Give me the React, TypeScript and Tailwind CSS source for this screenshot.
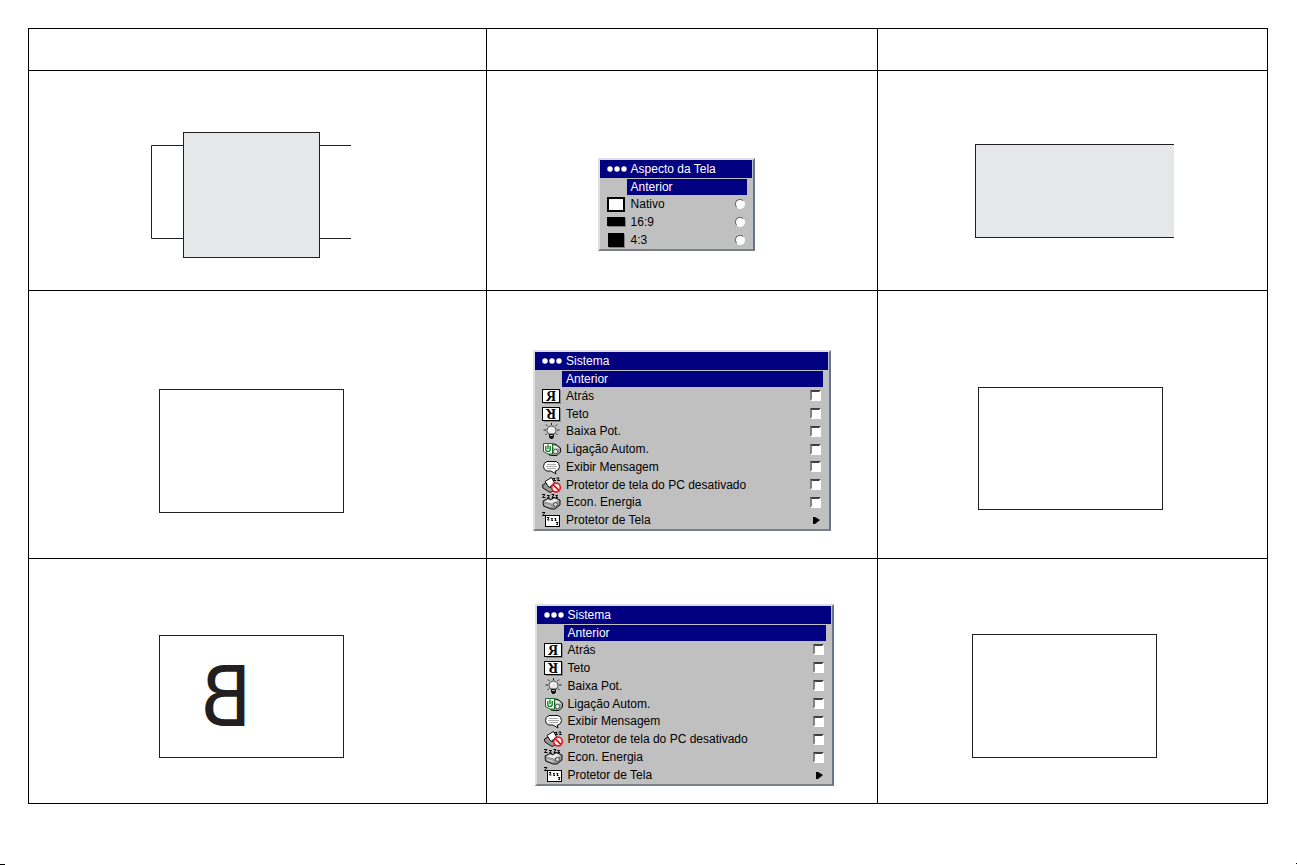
import type { ReactNode } from 'react';

const frameCls = 'border border-[#231f20]';
const panelCls = 'flex flex-col border-l-2 border-t-2 border-b-2 border-r-2 border-l-[#dfdfdf] border-t-[#dfdfdf] border-b-[#7b7f88] border-r-[#66758f] bg-[#c0c0c0] text-xs leading-4 text-black';
const checkCls = 'size-[11px] shrink-0 appearance-none border-2 border-t-[#404040] border-l-[#808080] border-r-white border-b-white bg-white checked:bg-black';
const radioCls = 'size-2.5 shrink-0 appearance-none rounded-full border border-t-[#606060] border-l-[#606060] border-r-white border-b-white bg-white checked:bg-black';

function Icon({ children }: { children: ReactNode }) {
  return <svg viewBox="0 0 20 16" className="h-4 w-5 shrink-0 overflow-visible" aria-hidden="true">{children}</svg>;
}

function LetterIcon({ turn }: { turn: string }) {
  return (
    <Icon>
      <rect x="2" y="2" width="17" height="14" fill="#8a8a8a" />
      <rect x="0.5" y="1.5" width="17" height="13" fill="#fff" stroke="#000" />
      <g transform={`translate(9 8) ${turn}`}>
        <text x="0" y="5" textAnchor="middle" fontSize="14" fontWeight="bold" className="font-['Liberation_Serif',serif]">R</text>
      </g>
    </Icon>
  );
}

const bulbIcon = (
  <Icon>
    <path d="M9.5 0 V2 M4 1.5 L5.5 3 M15 1.5 L13.5 3 M1.5 7 H4 M15 7 H17.5 M3.5 12 L5 10.5 M15.5 12 L14 10.5" stroke="#222" />
    <path d="M7 11 C3.5 8.5 5 3 9.5 3 C14 3 15.5 8.5 12 11 Z" fill="#e8e8e8" stroke="#444" />
    <path d="M8 5 L7 7.5" stroke="#fff" strokeWidth="1.6" />
    <path d="M7 11 H12 V14 L10.5 16 H8.5 L7 14 Z" fill="#111" />
    <path d="M8 12.5 H11" stroke="#bbb" />
  </Icon>
);

const powerIcon = (
  <Icon>
    <path d="M9 2.5 L14 3.5 L18.5 7 V11 L15 14.5 H11 L7 14 Z" fill="#a0a0a0" stroke="#111" />
    <path d="M11 4.5 L15 5.5 L17 7.5 H12 Z" fill="#eee" />
    <circle cx="13.5" cy="10.5" r="2.2" fill="#eee" stroke="#555" />
    <path d="M1.5 2.5 H10.5 V13 H6 L1.5 10.5 Z" fill="#fff" stroke="#176b22" />
    <path d="M3.8 5 V8.5 Q3.8 10.5 6 10.5 Q8.2 10.5 8.2 8.5 V5 M6 3.5 V8" fill="none" stroke="#108424" strokeWidth="1.4" />
  </Icon>
);

const messageIcon = (
  <Icon>
    <path d="M5 2.5 H14 Q17.5 3.5 17.5 7.5 Q17.5 11 14 12 H13 L14 15 L9 12 H5 Q1.5 11 1.5 7.5 Q1.5 3.5 5 2.5 Z" fill="#fff" stroke="#111" />
    <path d="M5 5.5 H14 M4 7.5 H15 M5 9.5 H14" stroke="#aaa" />
  </Icon>
);

const blockedIcon = (
  <Icon>
    <path d="M0.5 8 L4 6 L8 10.5 L13 8 V13 L8 15.5 L1 11 Z" fill="#999" stroke="#111" />
    <path d="M3 4.5 L9.5 0.5 L12.5 6 L7 10.5 Z" fill="#fff" stroke="#111" />
    <path d="M10.5 1.5 H13 L11.5 3.5 H14 M14.5 1 H17 L15.5 3.5 H18" fill="none" stroke="#000" />
    <circle cx="14" cy="10.5" r="4.3" fill="#fff" stroke="#e51c23" strokeWidth="1.7" />
    <path d="M11 7.5 L17 13.5" stroke="#e51c23" strokeWidth="1.8" />
  </Icon>
);

const energyIcon = (
  <Icon>
    <path d="M1 7 L6 4.5 L9 5.5 L12 3.5 L18 6 V11 L13 15 H9 L1.5 12 Z" fill="#999" stroke="#111" />
    <path d="M2.5 7.5 L6 5.5 L9 6.5 L12.5 4.5 L16.5 6.5 L10 9.5 Z" fill="#e8e8e8" />
    <circle cx="13.5" cy="10.5" r="2" fill="#ddd" stroke="#444" />
    <path d="M3 10.5 L9 12.5" stroke="#ddd" />
    <path d="M0 0.5 H3 L0.5 3.5 H3.5 M5 1.5 H7.5 L5.5 4 H8 M9.5 0.5 H12 L10 3.5 H12.5 M13.5 1.5 H15.5 L14 3.5 H16" fill="none" stroke="#000" />
  </Icon>
);

const saverIcon = (
  <Icon>
    <rect x="3.5" y="3.5" width="14" height="11" fill="#fff" stroke="#000" />
    <path d="M0 0.5 H3 L0.5 3.5 H3.5 M5 5.5 H7 L5.5 8 H7.5 M9 6.5 H10.5 L9.5 8.5 H11 M12.5 6.5 H14 L13 8.5 H14.5 M14 10.5 H16 L14.5 12.5 H16" fill="none" stroke="#000" />
  </Icon>
);

const systemItems: [string, ReactNode][] = [
  ['Atrás', <LetterIcon turn="scale(-1 1)" />],
  ['Teto', <LetterIcon turn="rotate(180)" />],
  ['Baixa Pot.', bulbIcon],
  ['Ligação Autom.', powerIcon],
  ['Exibir Mensagem', messageIcon],
  ['Protetor de tela do PC desativado', blockedIcon],
  ['Econ. Energia', energyIcon],
];

const aspectItems: [string, ReactNode][] = [
  ['Nativo', <Icon><rect x="1" y="2" width="16" height="13" fill="#fff" stroke="#000" strokeWidth="2" /></Icon>],
  ['16:9', <Icon><rect x="1" y="4" width="18" height="9" fill="#808080" /><rect x="0" y="3" width="18" height="9" /></Icon>],
  ['4:3', <Icon><rect x="2" y="2" width="16" height="14" fill="#808080" /><rect x="1" y="1" width="16" height="14" /></Icon>],
];

function MenuHead({ title }: { title: string }) {
  return (
    <>
      <div className="mr-px flex h-[18px] items-center bg-[#000080] pl-[7px] text-white">
        <svg viewBox="0 0 20 6" className="h-1.5 w-5" fill="#fff" aria-hidden="true">
          <circle cx="3" cy="3" r="2.7" /><circle cx="10" cy="3" r="2.7" /><circle cx="17" cy="3" r="2.7" />
        </svg>
        <h2 className="pl-1">{title}</h2>
      </div>
      <button type="button" className="mt-px mr-1.5 ml-[27px] h-4 bg-[#000080] pl-1 text-left text-white">Anterior</button>
    </>
  );
}

function SystemMenu({ name, className }: { name: string; className: string }) {
  return (
    <section className={`${panelCls} ${className}`}>
      <MenuHead title="Sistema" />
      <div className="grid flex-1 auto-rows-fr">
        {systemItems.map(([label, icon]) => (
          <label key={label} className="flex min-h-0 items-center gap-1 pr-2 pl-[7px]">
            {icon}
            <span className="flex-1">{label}</span>
            <input type="checkbox" name={name} className={checkCls} />
          </label>
        ))}
        <button type="button" className="flex min-h-0 items-center gap-1 pr-2 pl-[7px] text-left">
          {saverIcon}
          <span className="flex-1">Protetor de Tela</span>
          <svg viewBox="0 0 8 8" className="size-2" aria-hidden="true"><path d="M0 1 H2 L7 4 L2 8 H0 Z" /></svg>
        </button>
      </div>
    </section>
  );
}

function AspectMenu() {
  return (
    <section className={`${panelCls} w-[157px]`}>
      <MenuHead title="Aspecto da Tela" />
      {aspectItems.map(([label, icon]) => (
        <label key={label} className="flex h-[18px] items-center gap-1 pr-2 pl-[7px]">
          {icon}
          <span className="flex-1">{label}</span>
          <input type="radio" name="aspecto" className={radioCls} />
        </label>
      ))}
    </section>
  );
}

function Cell({ className, children }: { className: string; children: ReactNode }) {
  return (
    <td className="border-t border-l border-black p-0 align-top">
      <div className={`flex justify-center ${className}`}>{children}</div>
    </td>
  );
}

export default function App() {
  return (
    <div className="flex min-h-screen flex-col bg-white pt-7 font-['Liberation_Sans',Arial,sans-serif]">
      <main className="pr-[29px] pl-7">
        <table className="w-full table-fixed border-separate border-spacing-0 border-r border-b border-black">
          <colgroup>
            <col className="w-[37%]" />
            <col className="w-[31.5%]" />
            <col className="w-[31.5%]" />
          </colgroup>
          <thead>
            <tr className="h-[42px]">
              <th className="border-t border-l border-black" />
              <th className="border-t border-l border-black" />
              <th className="border-t border-l border-black" />
            </tr>
          </thead>
          <tbody>
            <tr className="h-[220px]">
              <Cell className="pt-[61px] pr-3.5">
                <svg width="200" height="126" fill="none" stroke="#231f20" aria-hidden="true">
                  <path d="M32 13.5 H0.5 V106.5 H32 M169 13.5 H200 M169 106.5 H200" />
                  <rect x="32.5" y="0.5" width="136" height="125" fill="#e6e7e8" />
                </svg>
              </Cell>
              <Cell className="pt-[87px] pr-3"><AspectMenu /></Cell>
              <Cell className="pt-[73px] pl-1"><div className="h-[94px] w-[199px] border-y border-l border-[#231f20] bg-[#e6e7e8]" /></Cell>
            </tr>
            <tr className="h-[268px]">
              <Cell className="pt-[98px] pr-3"><div className={`${frameCls} h-[124px] w-[185px]`} /></Cell>
              <Cell className="pt-[59px]"><SystemMenu name="sistema" className="h-[181px] w-[298px]" /></Cell>
              <Cell className="pt-24 pr-1"><div className={`${frameCls} h-[123px] w-[185px]`} /></Cell>
            </tr>
            <tr className="h-[245px]">
              <Cell className="pt-[76px] pr-3">
                <div className={`${frameCls} flex h-[123px] w-[185px] items-center pl-10`}>
                  <span className="-scale-x-100 font-['DejaVu_Sans_Condensed','DejaVu_Sans',sans-serif] text-[84px] leading-[84px] text-[#231f20]">B</span>
                </div>
              </Cell>
              <Cell className="pt-[45px] pl-1"><SystemMenu name="sistema2" className="h-[182px] w-[299px]" /></Cell>
              <Cell className="pt-[75px] pr-4"><div className={`${frameCls} h-[124px] w-[185px]`} /></Cell>
            </tr>
          </tbody>
        </table>
      </main>
      <footer className="mt-auto flex items-end justify-between">
        <span className="h-px w-[5px] bg-black" />
        <span className="mb-px size-px bg-black" />
      </footer>
    </div>
  );
}
